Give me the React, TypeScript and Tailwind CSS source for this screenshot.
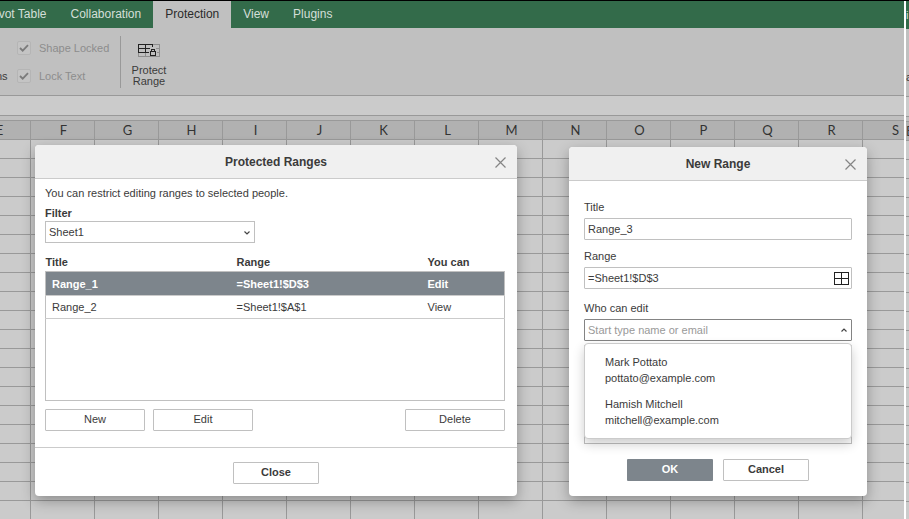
import { useState } from "react";
import type { ReactNode } from "react";

const TABS = ["Pivot Table", "Collaboration", "Protection", "View", "Plugins"];
const COLUMNS = "EFGHIJKLMNOPQRSTUVWXYZ".split("");
const ROWS = Array.from({ length: 60 }, (_, i) => i);

const RANGES = [
  { title: "Range_1", range: "=Sheet1!$D$3", access: "Edit" },
  { title: "Range_2", range: "=Sheet1!$A$1", access: "View" },
];

const PEOPLE = [
  { name: "Mark Pottato", email: "pottato@example.com" },
  { name: "Hamish Mitchell", email: "mitchell@example.com" },
];

function ProtectRangeIcon() {
  return (
    <svg width="22" height="13" viewBox="0 0 22 13" fill="none" shapeRendering="crispEdges" aria-hidden>
      <path d="M15 .5h6.500v12H.5V9M18 4.500h3.500M19 8.500h2.500M7.500 9v3.500" stroke="#8f8f8f" />
      <path d="M14.500 3V.5H.5v8H11M.5 4.500H12M7.500 .5v8" stroke="#222" />
      <path d="M12.500 7.500h5v4h-5zM13.500 7.500v-2h3v2" stroke="#222" />
    </svg>
  );
}

function Chevron({ up = false }: { up?: boolean }) {
  return (
    <svg width="6" height="4" viewBox="0 0 6 4" fill="none" aria-hidden>
      <path d={up ? "M.5 3.500L3 1l2.500 2.500" : "M.5 .5L3 3 5.500 .5"} stroke="#444" strokeWidth="1.200" />
    </svg>
  );
}

function LockedOption({ label }: { label: string }) {
  return (
    <label className="flex h-4 items-center gap-2 text-[#8d8d8d]">
      <span className="relative flex size-[14px] items-center justify-center">
        <input
          type="checkbox"
          defaultChecked
          disabled
          className="absolute inset-0 size-[14px] appearance-none rounded-[2px] border border-[#b5b5b5] bg-[#c4c4c4]"
        />
        <svg className="relative" width="10" height="8" viewBox="0 0 10 8" fill="none" aria-hidden>
          <path d="M1 4l2.700 2.700L9 1.200" stroke="#7b7b7b" strokeWidth="1.800" />
        </svg>
      </span>
      {label}
    </label>
  );
}

function DialogButton({ children, className = "" }: { children: ReactNode; className?: string }) {
  return (
    <button type="button" className={`h-[22px] rounded-[1px] border border-[#c0c0c0] pb-px ${className}`}>
      {children}
    </button>
  );
}

function Dialog({ title, className, children }: { title: string; className: string; children: ReactNode }) {
  return (
    <section
      role="dialog"
      aria-label={title}
      className={`absolute overflow-hidden rounded-[4px] bg-white shadow-[0_5px_14px_rgba(0,0,0,0.3)] ${className}`}
    >
      <header className="relative flex h-[34px] items-center justify-center border-b border-[#cbcbcb] bg-[#f0f0f0] pt-px">
        <h2 className="text-[12px] font-bold">{title}</h2>
        <button type="button" aria-label="Close dialog" className="absolute right-[11px] top-[12px]">
          <svg width="11" height="11" viewBox="0 0 11 11" fill="none" aria-hidden>
            <path d="M.5 .5l10 10M10.500 .5l-10 10" stroke="#858585" strokeWidth="1.200" />
          </svg>
        </button>
      </header>
      {children}
    </section>
  );
}

function Workbook() {
  return (
    <div className="flex min-w-0 flex-1 flex-col overflow-hidden bg-[#c0c0c0]">
      <nav className="flex h-[27px] shrink-0 bg-[#336b4a] text-[12px]">
        <div className="-ml-6 flex">
          {TABS.map((tab) => (
            <button
              key={tab}
              type="button"
              className={
                tab === "Protection"
                  ? "whitespace-nowrap bg-[#c0c0c0] px-3 pb-px text-[#2b2b2b]"
                  : "whitespace-nowrap px-3 pb-px text-[#d3dfd8]"
              }
            >
              {tab}
            </button>
          ))}
        </div>
      </nav>
      <div className="flex h-[68px] shrink-0 border-b border-[#999] text-[11px]">
        <div className="flex w-[17px] justify-start pt-10">
          <span className="-ml-1 h-4 leading-4">ns</span>
        </div>
        <div className="flex w-[103px] flex-col gap-3 whitespace-nowrap pt-3">
          <LockedOption label="Shape Locked" />
          <LockedOption label="Lock Text" />
        </div>
        <div className="mt-2 h-[52px] w-px bg-[#999]" />
        <button type="button" className="flex w-14 flex-col items-center gap-2 pt-4 leading-[11px]">
          <ProtectRangeIcon />
          <span>
            Protect
            <br />
            Range
          </span>
        </button>
      </div>
      <div className="h-5 shrink-0 border-b border-[#999] bg-[#cbcbcb]" />
      <div className="mt-1 flex h-5 shrink-0 border-y border-[#999] bg-[#b1b1b1]">
        <div className="-ml-[33px] flex font-[Lato,sans-serif] text-[13px] text-[#333]">
          {COLUMNS.map((name) => (
            <div
              key={name}
              className="flex w-16 shrink-0 items-center justify-center border-r border-[#999] pl-[2px] pt-[2px]"
            >
              {name}
            </div>
          ))}
        </div>
      </div>
      <div className="-ml-[33px] min-h-0 flex-1 overflow-hidden bg-[#cbcbcb]">
        {ROWS.map((row) => (
          <div key={row} className="flex">
            {COLUMNS.map((name) => (
              <div key={name} className="h-[19px] w-16 shrink-0 border-b border-r border-[#999]" />
            ))}
          </div>
        ))}
      </div>
    </div>
  );
}

// Sliver of the neighbouring workbook window
function WorkbookEdge() {
  return (
    <div className="flex w-[3px] shrink-0 flex-col overflow-hidden bg-[#c0c0c0] text-[11px]">
      <div className="flex h-7 shrink-0 items-center bg-[#336b4a] text-[#d3dfd8]">i</div>
      <div className="h-[68px] shrink-0 border-b border-[#999] pt-10 leading-4">a</div>
      <div className="h-5 shrink-0 border-b border-[#999] bg-[#cbcbcb]" />
      <div className="mt-1 flex h-5 shrink-0 items-center border-y border-[#999] bg-[#b1b1b1] pt-[2px] font-[Lato,sans-serif] text-[13px]">
        E
      </div>
      <div className="min-h-0 flex-1 overflow-hidden bg-[#cbcbcb]">
        {ROWS.map((row) => (
          <div key={row} className="h-[19px] border-b border-[#999]" />
        ))}
      </div>
    </div>
  );
}

function ProtectedRanges() {
  const [selected, setSelected] = useState("Range_1");

  return (
    <Dialog title="Protected Ranges" className="left-[35px] top-[145px] w-[482px]">
      <div className="px-[10px] pb-4 pt-[6px]">
        <p className="leading-4">You can restrict editing ranges to selected people.</p>
        <label htmlFor="filter" className="mt-1 block font-bold leading-4">
          Filter
        </label>
        <div className="relative w-[210px]">
          <select id="filter" className="block h-[22px] w-full appearance-none border border-[#c0c0c0] bg-white px-[3px]">
            <option>Sheet1</option>
          </select>
          <span className="pointer-events-none absolute right-[5px] top-[10px]">
            <Chevron />
          </span>
        </div>
        <table className="mt-[10px] w-[460px] table-fixed border-collapse text-left leading-4">
          <thead>
            <tr className="h-[18px]">
              <th className="w-[191px] p-0">Title</th>
              <th className="w-[191px] p-0">Range</th>
              <th className="p-0">You can</th>
            </tr>
          </thead>
          <tbody className="border border-[#c0c0c0]">
            {RANGES.map((item) => (
              <tr
                key={item.title}
                onClick={() => setSelected(item.title)}
                className={
                  item.title === selected
                    ? "h-6 border-b border-[#cbcbcb] bg-[#7d858c] font-bold text-white"
                    : "h-[23px] border-b border-[#cbcbcb]"
                }
              >
                <td className="p-0 pl-[6px] pt-px">{item.title}</td>
                <td className="p-0 pt-px">{item.range}</td>
                <td className="p-0 pt-px">{item.access}</td>
              </tr>
            ))}
            <tr className="h-[82px]">
              <td colSpan={3} />
            </tr>
          </tbody>
        </table>
        <div className="mt-2 flex gap-2">
          <DialogButton className="w-[100px]">New</DialogButton>
          <DialogButton className="w-[100px]">Edit</DialogButton>
          <DialogButton className="ml-auto mr-[2px] w-[100px]">Delete</DialogButton>
        </div>
      </div>
      <footer className="flex justify-center border-t border-[#cbcbcb] pb-3 pt-[14px]">
        <DialogButton className="w-[86px] font-bold">Close</DialogButton>
      </footer>
    </Dialog>
  );
}

function NewRange() {
  return (
    <Dialog title="New Range" className="left-[569px] top-[147px] w-[298px]">
      <form className="px-[15px] pb-[15px] pt-[18px]">
        <label htmlFor="title" className="block leading-4">
          Title
        </label>
        <input
          id="title"
          defaultValue="Range_3"
          className="mt-[3px] block h-[22px] w-full rounded-[1px] border border-[#c0c0c0] px-[3px]"
        />
        <label htmlFor="range" className="mt-2 block leading-4">
          Range
        </label>
        <div className="mt-[3px] flex h-[22px] items-center rounded-[1px] border border-[#c0c0c0] pr-[2px]">
          <input id="range" defaultValue="=Sheet1!$D$3" className="h-5 min-w-0 flex-1 px-[3px]" />
          <button type="button" aria-label="Select data range">
            <svg width="15" height="13" viewBox="0 0 15 13" fill="none" shapeRendering="crispEdges" aria-hidden>
              <path d="M.5 .5h14v12H.5zM7.500 .5v12M.5 6.500h14" stroke="#222" />
            </svg>
          </button>
        </div>
        <label htmlFor="editors" className="mt-[11px] block leading-4">
          Who can edit
        </label>
        <div className="mt-[3px] flex h-[22px] items-center rounded-[1px] border border-[#848484] pr-1">
          <input
            id="editors"
            placeholder="Start type name or email"
            className="h-5 min-w-0 flex-1 px-[3px] placeholder:text-[#999]"
          />
          <button type="button" aria-label="Hide suggestions">
            <Chevron up />
          </button>
        </div>
        <div className="relative mt-1 h-[99px] border border-[#c0c0c0]">
          <ul className="absolute -inset-x-px -top-[3px] flex flex-col gap-[10px] rounded-[4px] border border-[#cbcbcb] bg-white px-5 py-[10px] leading-4 shadow-[0_5px_12px_rgba(0,0,0,0.2)]">
            {PEOPLE.map((person) => (
              <li key={person.email}>
                <div>{person.name}</div>
                <div>{person.email}</div>
              </li>
            ))}
          </ul>
        </div>
        <div className="mt-[15px] flex justify-center gap-[10px] font-bold">
          <button type="button" className="h-[22px] w-[86px] rounded-[1px] bg-[#7d858c] pb-px text-white">
            OK
          </button>
          <DialogButton className="w-[86px]">Cancel</DialogButton>
        </div>
      </form>
    </Dialog>
  );
}

export default function App() {
  return (
    <div className="relative h-screen overflow-hidden bg-white font-['Liberation_Sans',Arial,sans-serif] text-[11px] text-[#3b3b3b]">
      <div className="flex h-full gap-[2px] border-t border-black">
        <Workbook />
        <WorkbookEdge />
      </div>
      <ProtectedRanges />
      <NewRange />
    </div>
  );
}
